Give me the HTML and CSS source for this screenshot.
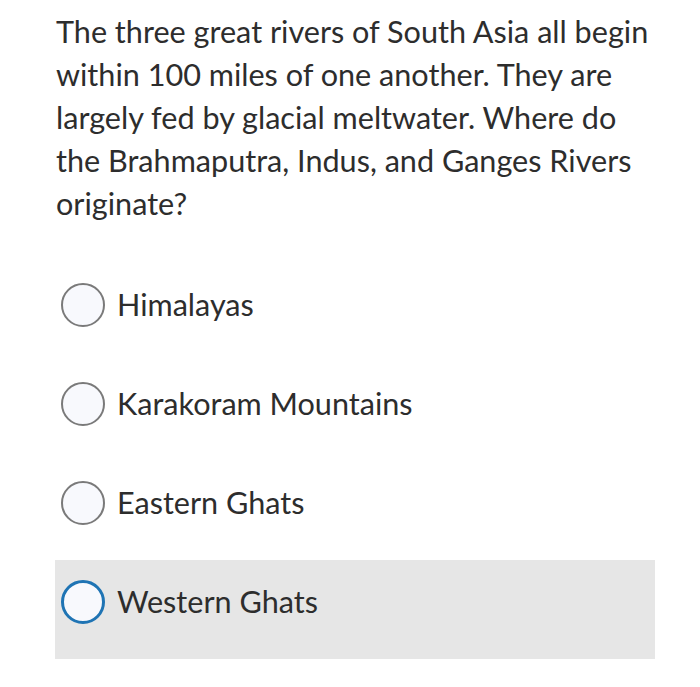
FILE: index.html
```html
<!DOCTYPE html>
<html>
<head>
<meta charset="utf-8">
<link rel="stylesheet" href="styles.css">
</head>
<body>
<div class="quiz">
  <p class="question">The three great rivers of South Asia all begin within 100 miles of one another. They are largely fed by glacial meltwater. Where do the Brahmaputra, Indus, and Ganges Rivers originate?</p>
  <div class="options">
    <div class="option"><span class="radio"></span><span class="label">Himalayas</span></div>
    <div class="option"><span class="radio"></span><span class="label">Karakoram Mountains</span></div>
    <div class="option"><span class="radio"></span><span class="label">Eastern Ghats</span></div>
    <div class="option active"><span class="radio"></span><span class="label">Western Ghats</span></div>
  </div>
</div>
</body>
</html>
```
FILE: styles.css
```css
html, body {
  margin: 0;
  padding: 0;
  background: #ffffff;
}
body {
  font-family: Lato, "Open Sans", sans-serif;
  color: #2d2d2d;
}
.quiz {
  width: 600px;
  padding: 10px 0 0 55px;
}
.question {
  margin: 0;
  padding-left: 1px;
  font-size: 30.6px;
  line-height: 43px;
  width: 610px;
}
.options {
  margin-top: 38px;
  display: flex;
  flex-direction: column;
}
.option {
  height: 99px;
  box-sizing: border-box;
  padding: 20px 0 0 6px;
  display: flex;
  align-items: flex-start;
}
.option.active {
  background: #e6e6e6;
  padding-top: 20px;
}
.radio {
  width: 44px;
  height: 44px;
  box-sizing: border-box;
  border: 2px solid #7a7a7a;
  border-radius: 50%;
  background: #f8f9fd;
  flex: none;
}
.option.active .radio {
  border: 3px solid #1f74b4;
}
.label {
  margin-left: 12px;
  font-size: 30.6px;
  line-height: 44px;
}
```
